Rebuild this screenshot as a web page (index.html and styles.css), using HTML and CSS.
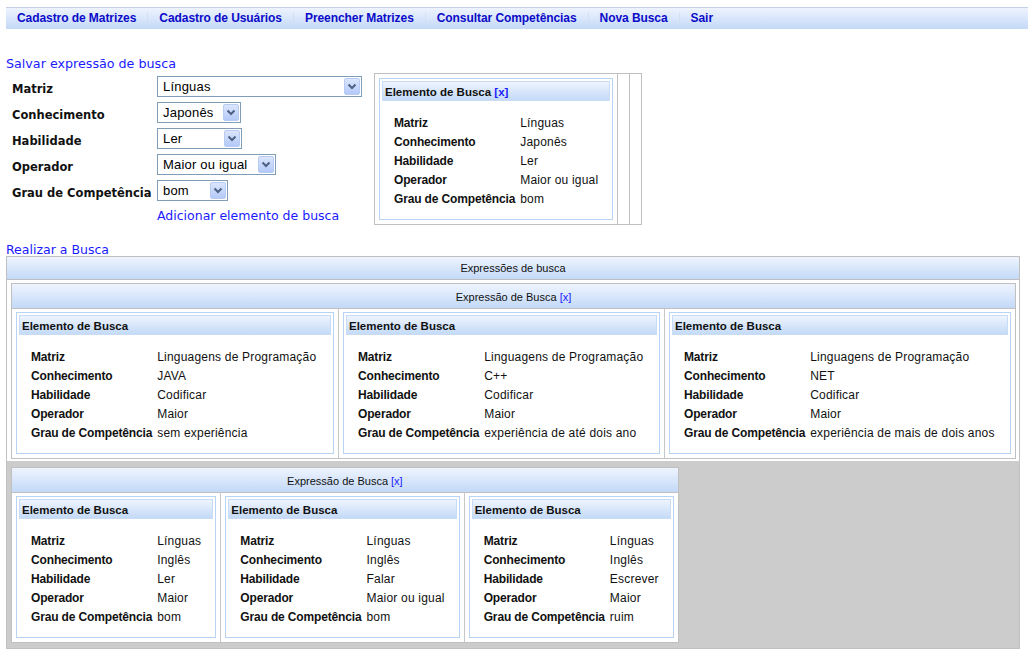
FILE: index.html
```html
<!DOCTYPE html>
<html lang="pt-BR">
<head>
<meta charset="utf-8">
<title>Consultar Competências</title>
<link rel="stylesheet" href="styles.css">
</head>
<body>
<div class="page">
  <nav class="menu">
    <a href="#">Cadastro de Matrizes</a><span class="sep"></span><a href="#">Cadastro de Usuários</a><span class="sep"></span><a href="#">Preencher Matrizes</a><span class="sep"></span><a href="#">Consultar Competências</a><span class="sep"></span><a href="#">Nova Busca</a><span class="sep"></span><a href="#">Sair</a>
  </nav>

  <a class="link save" href="#">Salvar expressão de busca</a>

  <div class="top">
    <div class="form">
      <div class="frow">
        <span class="flabel">Matriz</span>
        <div class="select s-matriz"><span class="sval">Línguas</span><span class="sbtn"><svg viewBox="0 0 14 15" width="14" height="15"><path d="M3.5 5.5 L7 9 L10.5 5.5" fill="none" stroke="#4d6185" stroke-width="2"/></svg></span></div>
      </div>
      <div class="frow">
        <span class="flabel">Conhecimento</span>
        <div class="select s-conh"><span class="sval">Japonês</span><span class="sbtn"><svg viewBox="0 0 14 15" width="14" height="15"><path d="M3.5 5.5 L7 9 L10.5 5.5" fill="none" stroke="#4d6185" stroke-width="2"/></svg></span></div>
      </div>
      <div class="frow">
        <span class="flabel">Habilidade</span>
        <div class="select s-hab"><span class="sval">Ler</span><span class="sbtn"><svg viewBox="0 0 14 15" width="14" height="15"><path d="M3.5 5.5 L7 9 L10.5 5.5" fill="none" stroke="#4d6185" stroke-width="2"/></svg></span></div>
      </div>
      <div class="frow">
        <span class="flabel">Operador</span>
        <div class="select s-op"><span class="sval">Maior ou igual</span><span class="sbtn"><svg viewBox="0 0 14 15" width="14" height="15"><path d="M3.5 5.5 L7 9 L10.5 5.5" fill="none" stroke="#4d6185" stroke-width="2"/></svg></span></div>
      </div>
      <div class="frow">
        <span class="flabel">Grau de Competência</span>
        <div class="select s-grau"><span class="sval">bom</span><span class="sbtn"><svg viewBox="0 0 14 15" width="14" height="15"><path d="M3.5 5.5 L7 9 L10.5 5.5" fill="none" stroke="#4d6185" stroke-width="2"/></svg></span></div>
      </div>
      <div class="frow add">
        <span class="flabel"></span>
        <a class="link" href="#">Adicionar elemento de busca</a>
      </div>
    </div>

    <div class="pending">
      <div class="pcell">
        <div class="card">
          <div class="card-head">Elemento de Busca <a class="x bold" href="#">[x]</a></div>
          <table class="card-body">
            <tr><th>Matriz</th><td>Línguas</td></tr>
            <tr><th>Conhecimento</th><td>Japonês</td></tr>
            <tr><th>Habilidade</th><td>Ler</td></tr>
            <tr><th>Operador</th><td>Maior ou igual</td></tr>
            <tr><th>Grau de Competência</th><td>bom</td></tr>
          </table>
        </div>
      </div>
      <div class="pcell empty"></div>
      <div class="pcell empty"></div>
    </div>
  </div>

  <a class="link run" href="#">Realizar a Busca</a>

  <div class="results">
    <div class="res-head">Expressões de busca</div>

    <div class="res-row first">
      <div class="expr wide">
        <div class="expr-head">Expressão de Busca <a class="x" href="#">[x]</a></div>
        <div class="expr-cells cols3">
          <div class="ecell">
            <div class="card">
              <div class="card-head">Elemento de Busca</div>
              <table class="card-body">
                <tr><th>Matriz</th><td>Linguagens de Programação</td></tr>
                <tr><th>Conhecimento</th><td>JAVA</td></tr>
                <tr><th>Habilidade</th><td>Codificar</td></tr>
                <tr><th>Operador</th><td>Maior</td></tr>
                <tr><th>Grau de Competência</th><td>sem experiência</td></tr>
              </table>
            </div>
          </div>
          <div class="ecell">
            <div class="card">
              <div class="card-head">Elemento de Busca</div>
              <table class="card-body">
                <tr><th>Matriz</th><td>Linguagens de Programação</td></tr>
                <tr><th>Conhecimento</th><td>C++</td></tr>
                <tr><th>Habilidade</th><td>Codificar</td></tr>
                <tr><th>Operador</th><td>Maior</td></tr>
                <tr><th>Grau de Competência</th><td>experiência de até dois ano</td></tr>
              </table>
            </div>
          </div>
          <div class="ecell">
            <div class="card">
              <div class="card-head">Elemento de Busca</div>
              <table class="card-body">
                <tr><th>Matriz</th><td>Linguagens de Programação</td></tr>
                <tr><th>Conhecimento</th><td>NET</td></tr>
                <tr><th>Habilidade</th><td>Codificar</td></tr>
                <tr><th>Operador</th><td>Maior</td></tr>
                <tr><th>Grau de Competência</th><td>experiência de mais de dois anos</td></tr>
              </table>
            </div>
          </div>
        </div>
      </div>
    </div>

    <div class="res-row second">
      <div class="expr fit">
        <div class="expr-head">Expressão de Busca <a class="x" href="#">[x]</a></div>
        <div class="expr-cells auto">
          <div class="ecell">
            <div class="card">
              <div class="card-head">Elemento de Busca</div>
              <table class="card-body">
                <tr><th>Matriz</th><td>Línguas</td></tr>
                <tr><th>Conhecimento</th><td>Inglês</td></tr>
                <tr><th>Habilidade</th><td>Ler</td></tr>
                <tr><th>Operador</th><td>Maior</td></tr>
                <tr><th>Grau de Competência</th><td>bom</td></tr>
              </table>
            </div>
          </div>
          <div class="ecell">
            <div class="card">
              <div class="card-head">Elemento de Busca</div>
              <table class="card-body">
                <tr><th>Matriz</th><td>Línguas</td></tr>
                <tr><th>Conhecimento</th><td>Inglês</td></tr>
                <tr><th>Habilidade</th><td>Falar</td></tr>
                <tr><th>Operador</th><td>Maior ou igual</td></tr>
                <tr><th>Grau de Competência</th><td>bom</td></tr>
              </table>
            </div>
          </div>
          <div class="ecell">
            <div class="card">
              <div class="card-head">Elemento de Busca</div>
              <table class="card-body">
                <tr><th>Matriz</th><td>Línguas</td></tr>
                <tr><th>Conhecimento</th><td>Inglês</td></tr>
                <tr><th>Habilidade</th><td>Escrever</td></tr>
                <tr><th>Operador</th><td>Maior</td></tr>
                <tr><th>Grau de Competência</th><td>ruim</td></tr>
              </table>
            </div>
          </div>
        </div>
      </div>
    </div>
  </div>
</div>
</body>
</html>
```

FILE: styles.css
```css
* { box-sizing: border-box; }

html, body {
  margin: 0;
  padding: 0;
  background: #fff;
}

body {
  font-family: "Liberation Sans", Arial, sans-serif;
  color: #000;
}

.page {
  padding: 7px 8px 0 6px;
}

/* top menu */
.menu {
  display: flex;
  align-items: center;
  height: 22px;
  margin-right: -8px;
  padding-left: 11px;
  padding-bottom: 1px;
  border-top: 1px solid #c4d1e4;
  background: linear-gradient(#eef3fe, #c3d9f7);
}
.menu a {
  font-family: "Liberation Sans", Arial, sans-serif;
  font-weight: bold;
  font-size: 12px;
  letter-spacing: -0.07px;
  color: #0b0bc8;
  text-decoration: none;
  line-height: 20px;
}
.menu .sep {
  display: inline-block;
  width: 1px;
  height: 10px;
  margin: 0 11px;
  background: #d3deef;
}

/* links */
.link {
  display: block;
  font-family: "DejaVu Sans", Verdana, sans-serif;
  font-size: 12.5px;
  color: #1a1aff;
  text-decoration: none;
  line-height: 16px;
  width: max-content;
}
.save {
  margin-top: 27px;
  font-size: 12.7px;
}
.run {
  margin-top: 16px;
  height: 14px;
  line-height: 16px;
}

/* top section */
.top {
  display: flex;
  align-items: flex-start;
  gap: 12px;
  margin-top: 1px;
}

.form {
  padding-top: 0;
  padding-left: 6px;
}
.frow {
  display: flex;
  align-items: center;
  height: 26px;
  padding-top: 1px;
}
.frow.add {
  height: 23px;
  padding-top: 3px;
}
.flabel {
  width: 145px;
  flex: none;
  padding-top: 5px;
  font-family: "DejaVu Sans", Verdana, sans-serif;
  font-weight: bold;
  font-size: 11.5px;
  color: #111;
}

.select {
  display: flex;
  align-items: center;
  justify-content: space-between;
  height: 21px;
  border: 1px solid #7f9db9;
  background: #fff;
  padding: 0 1px 0 5px;
}
.sval {
  font-family: "Liberation Sans", Arial, sans-serif;
  font-size: 13px;
  letter-spacing: 0.2px;
  color: #000;
  white-space: nowrap;
}
.sbtn {
  display: flex;
  align-items: center;
  justify-content: center;
  width: 16px;
  height: 17px;
  border: 1px solid #b8cbf2;
  border-radius: 2px;
  background: linear-gradient(#dbe6fd, #b4c9f8);
}
.sbtn svg { display: block; }
.s-matriz { width: 205px; }
.s-conh { width: 84px; }
.s-hab { width: 85px; }
.s-op { width: 119px; }
.s-grau { width: 71px; }

/* pending search expression box */
.pending {
  display: flex;
  border: 1px solid #c0c0c0;
  background: #fff;
}
.pcell {
  padding: 4px;
}
.pcell.empty {
  width: 12px;
  padding: 0;
  border-left: 1px solid #c0c0c0;
  align-self: stretch;
}

/* element card */
.card {
  border: 1px solid #b8d3f4;
  padding: 2px;
  background: #fff;
}
.card-head {
  height: 20px;
  line-height: 19px;
  padding-left: 2px;
  padding-top: 1px;
  border: 1px solid #c8dcf6;
  background: linear-gradient(#eef4fe, #c4daf7);
  font-family: "Liberation Sans", Arial, sans-serif;
  font-weight: bold;
  font-size: 11.5px;
  color: #111;
  white-space: nowrap;
}
.x {
  color: #1a1aff;
  text-decoration: none;
  font-weight: normal;
}
.x.bold {
  font-weight: bold;
}
.card-body {
  border-collapse: collapse;
  margin: 13px 12px 8px 12px;
}
.card-body th,
.card-body td {
  padding: 0;
  height: 19px;
  line-height: 19px;
  font-size: 12px;
  text-align: left;
  white-space: nowrap;
  vertical-align: middle;
}
.card-body th {
  font-weight: bold;
  letter-spacing: -0.15px;
  padding-right: 5px;
  color: #111;
}
.card-body td {
  letter-spacing: 0.2px;
  color: #111;
}

/* results */
.results {
  margin-top: 0;
  width: 1014px;
  border: 1px solid #c0c0c0;
  background: #cccccc;
}
.res-head {
  height: 23px;
  line-height: 22px;
  border-bottom: 1px solid #c0c0c0;
  background: linear-gradient(#eef4fe, #c3d9f7);
  text-align: center;
  font-size: 11px;
  color: #111;
}
.res-row.first {
  background: #fff;
  padding: 3px 3px 2px 4px;
}
.res-row.second {
  padding: 6px 4px 5px 4px;
}

.expr {
  border: 1px solid #c0c0c0;
  background: #fff;
}
.expr.fit {
  display: inline-block;
  vertical-align: top;
}
.expr-head {
  height: 25px;
  line-height: 24px;
  padding-top: 1px;
  border-bottom: 1px solid #c0c0c0;
  background: linear-gradient(#eef4fe, #c3d9f7);
  text-align: center;
  font-size: 11px;
  color: #111;
}
.expr-cells {
  display: grid;
}
.expr-cells.cols3 {
  grid-template-columns: 326px 326px minmax(0, 1fr);
}
.expr-cells.auto {
  grid-auto-flow: column;
  grid-auto-columns: max-content;
}
.ecell {
  padding: 3px 4px 4px;
  min-width: 0;
}
.ecell + .ecell {
  border-left: 1px solid #c8c8c8;
}
```
